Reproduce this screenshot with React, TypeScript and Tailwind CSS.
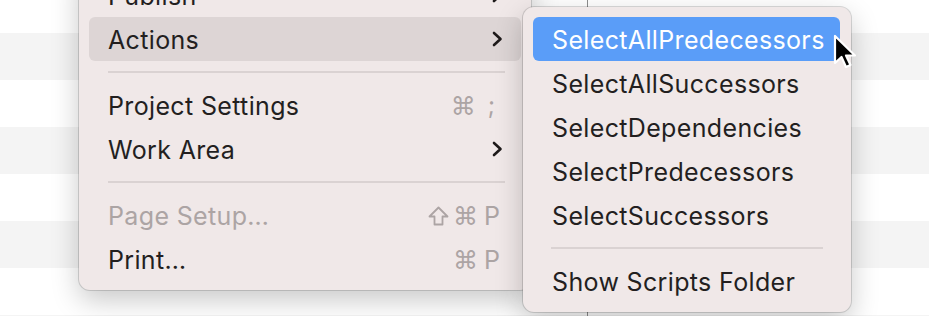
import React from "react";

const font = { fontFamily: "Inter, 'Noto Sans', 'DejaVu Sans', sans-serif" };
const sym = { fontFamily: "'DejaVu Sans', sans-serif" };

function Chevron() {
  return (
    <svg width="14" height="16" viewBox="0 0 14 16" className="shrink-0">
      <polyline points="4,2 10.5,8 4,14" fill="none" stroke="#1e1a1a" strokeWidth="2.6" strokeLinecap="round" strokeLinejoin="round" />
    </svg>
  );
}

function ShiftIcon() {
  return (
    <svg width="21" height="20" viewBox="0 0 21 20" className="shrink-0">
      <path d="M10.5 1.5 L19.5 10.5 L14.5 10.5 L14.5 18.5 L6.5 18.5 L6.5 10.5 L1.5 10.5 Z" fill="none" stroke="#aca4a4" strokeWidth="1.8" strokeLinejoin="round" />
    </svg>
  );
}

function Item({ label, right, disabled, active }: { label: string; right?: React.ReactNode; disabled?: boolean; active?: boolean }) {
  return (
    <div
      className={`mx-[10px] h-[44px] flex items-center justify-between pl-[19px] pr-[17px] rounded-[6px] ${active ? "bg-[#ddd5d5]" : ""} ${disabled ? "text-[#aca4a4]" : "text-[#231f1f]"}`}
    >
      <span className="text-[25px] tracking-[0.35px] pt-[3px]">{label}</span>
      {right}
    </div>
  );
}

function Sep({ cls }: { cls: string }) {
  return (
    <div className="h-[22px] flex flex-col justify-center">
      <div className={`h-[2px] bg-[#dad2d2] ${cls}`} />
    </div>
  );
}

function SubItem({ label, active }: { label: string; active?: boolean }) {
  return (
    <div
      className={`ml-[10px] mr-[11px] h-[44px] flex items-center pl-[19px] rounded-[6px] ${active ? "bg-[#5a9df8] text-white" : "text-[#231f1f]"}`}
    >
      <span className="text-[25px] tracking-[0.35px] pt-[3px]">{label}</span>
    </div>
  );
}

export default function App() {
  const stripes = [false, true, false, true, false, true, false];
  return (
    <div className="relative w-[929px] h-[316px] overflow-hidden bg-white" style={font}>
      {/* background list */}
      <div className="flex flex-col">
        <div className="h-[33px] bg-white" />
        {stripes.map((w, i) => (
          <div key={i} className={`h-[47px] ${w ? "bg-white" : "bg-[#f4f4f4]"}`} />
        ))}
      </div>
      <div className="absolute top-0 bottom-0 left-[587px] w-px bg-[#8d8d8d]" />

      {/* main menu */}
      <div className="absolute left-[79px] top-[-37px] w-[452px] pt-[10px] pb-[9px] rounded-[11px] bg-[#f0e8e8] shadow-[0_10px_28px_rgba(0,0,0,0.22),0_0_0_1px_rgba(0,0,0,0.14)]">
        <Item label="Publish" right={<Chevron />} />
        <Item label="Actions" right={<Chevron />} active />
        <Sep cls="ml-[29px] mr-[26px]" />
        <Item
          label="Project Settings"
          right={
            <span className="mr-[9px] pt-[2px] text-[#aca4a4] flex items-center" style={sym}>
              <span className="text-[25px] leading-none">⌘</span>
              <span className="ml-[12px] text-[24px] leading-none" style={font}>;</span>
            </span>
          }
        />
        <Item label="Work Area" right={<Chevron />} />
        <Sep cls="ml-[29px] mr-[26px]" />
        <Item
          label="Page Setup…"
          disabled
          right={
            <span className="mr-[4px] pt-[2px] text-[#aca4a4] flex items-center" style={sym}>
              <ShiftIcon />
              <span className="ml-[4px] text-[25px] leading-none">⌘</span>
              <span className="ml-[6px] text-[25px] leading-none" style={font}>P</span>
            </span>
          }
        />
        <Item
          label="Print…"
          right={
            <span className="mr-[4px] pt-[2px] text-[#aca4a4] flex items-center" style={sym}>
              <span className="text-[25px] leading-none">⌘</span>
              <span className="ml-[6px] text-[25px] leading-none" style={font}>P</span>
            </span>
          }
        />
      </div>

      {/* submenu */}
      <div className="absolute left-[523px] top-[7px] w-[328px] pt-[10px] pb-[9px] rounded-[11px] bg-[#f0e8e8] shadow-[0_10px_28px_rgba(0,0,0,0.22),0_0_0_1px_rgba(0,0,0,0.14)]">
        <SubItem label="SelectAllPredecessors" active />
        <SubItem label="SelectAllSuccessors" />
        <SubItem label="SelectDependencies" />
        <SubItem label="SelectPredecessors" />
        <SubItem label="SelectSuccessors" />
        <Sep cls="ml-[28px] mr-[28px]" />
        <SubItem label="Show Scripts Folder" />
      </div>

      {/* cursor */}
      <svg className="absolute left-[832px] top-[34px]" width="28" height="40" viewBox="0 0 28 40">
        <path
          d="M3 2 L3 29 L9.5 23 L14 33 L18.5 31 L14 21.5 L23 21.5 Z"
          fill="#000"
          stroke="#fff"
          strokeWidth="2.2"
          strokeLinejoin="round"
        />
      </svg>
    </div>
  );
}
